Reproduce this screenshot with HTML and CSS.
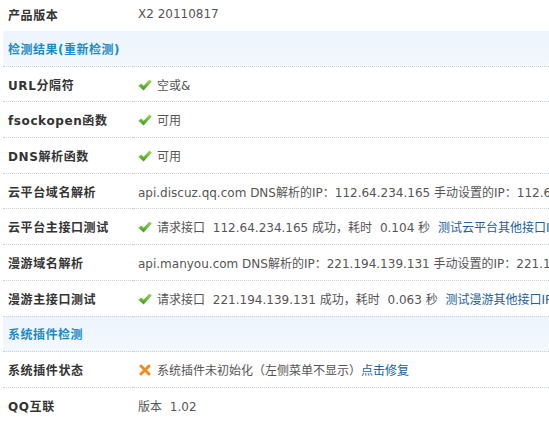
FILE: index.html
```html
<!DOCTYPE html>
<html>

<head>
    <meta charset="utf-8">
    <link rel="stylesheet" href="styles.css">
</head>

<body>
    <table class="check">
        <tr class="first">
            <th>产品版本</th>
            <td>X2 20110817</td>
        </tr>
        <tr class="head">
            <td colspan="2">检测结果(重新检测)</td>
        </tr>
        <tr>
            <th>URL分隔符</th>
            <td><svg class="ok" viewBox="0 0 14 12"><use href="#tick" /></svg>空或&amp;</td>
        </tr>
        <tr>
            <th>fsockopen函数</th>
            <td><svg class="ok" viewBox="0 0 14 12"><use href="#tick" /></svg>可用</td>
        </tr>
        <tr>
            <th>DNS解析函数</th>
            <td><svg class="ok" viewBox="0 0 14 12"><use href="#tick" /></svg>可用</td>
        </tr>
        <tr>
            <th>云平台域名解析</th>
            <td>api.discuz.qq.com DNS解析的IP：112.64.234.165 手动设置的IP：112.64.234.165</td>
        </tr>
        <tr>
            <th>云平台主接口测试</th>
            <td><svg class="ok" viewBox="0 0 14 12"><use href="#tick" /></svg>请求接口 <span class="gap">112.64.234.165</span> 成功，耗时 <span class="gap">0.104</span> 秒 <a class="gap" href="#">测试云平台其他接口IP</a></td>
        </tr>
        <tr>
            <th>漫游域名解析</th>
            <td>api.manyou.com DNS解析的IP：221.194.139.131 手动设置的IP：221.194.139.131</td>
        </tr>
        <tr>
            <th>漫游主接口测试</th>
            <td><svg class="ok" viewBox="0 0 14 12"><use href="#tick" /></svg>请求接口 <span class="gap">221.194.139.131</span> 成功，耗时 <span class="gap">0.063</span> 秒 <a class="gap" href="#">测试漫游其他接口IP</a></td>
        </tr>
        <tr class="head">
            <td colspan="2">系统插件检测</td>
        </tr>
        <tr>
            <th>系统插件状态</th>
            <td><svg class="bad" viewBox="0 0 14 12"><path d="M3 2 L11 10 M11 2 L3 10" /></svg>系统插件未初始化（左侧菜单不显示）<a href="#">点击修复</a></td>
        </tr>
        <tr class="last">
            <th>QQ互联</th>
            <td>版本 <span class="gap">1.02</span></td>
        </tr>
    </table>

    <!-- icon defs -->
    <svg width="0" height="0" class="defs">
        <defs>
            <linearGradient id="green" x1="0" y1="0" x2="0" y2="1">
                <stop offset="0" stop-color="#9bd95a" />
                <stop offset="1" stop-color="#3d9a1c" />
            </linearGradient>
            <path id="tick" d="M0.4 6.8 L3.2 4.4 L5.6 6.8 L11.4 0.6 L13.8 2.6 L5.6 11.4 Z" fill="url(#green)" />
        </defs>
    </svg>
</body>

</html>
```

FILE: styles.css
```css
html {
    overflow: hidden;
}

body {
    margin: 0;
    font-family: "DejaVu Sans", "Noto Sans CJK SC", sans-serif;
    font-size: 12px;
    color: #555;
}

.check {
    border-collapse: collapse;
    margin-left: 3px;
    width: 780px;
    white-space: nowrap;
}

.check th,
.check td {
    height: 34.7px;
    padding: 0 0 0 5px;
    border-bottom: 1px dotted #c8d0d8;
    text-align: left;
    vertical-align: middle;
}

.check th {
    width: 125px;
    color: #333;
    font-weight: bold;
    letter-spacing: 0.6px;
}

.check .first th,
.check .first td {
    height: 28px;
    padding-bottom: 3px;
    border-bottom: none;
}

.check .last th,
.check .last td {
    border-bottom: none;
}

.head td {
    background: linear-gradient(#edf4fd, #f3f8fd);
    color: #1a8cc4;
    font-weight: bold;
    letter-spacing: 0.5px;
}

.gap {
    margin-left: 4px;
}

a {
    color: #23609c;
    text-decoration: none;
}

.ok,
.bad {
    width: 14px;
    height: 12px;
    margin-right: 5px;
    vertical-align: -1px;
}

.bad path {
    stroke: #f08c1e;
    stroke-width: 3;
    stroke-linecap: round;
    fill: none;
}

.defs {
    position: absolute;
}
```
